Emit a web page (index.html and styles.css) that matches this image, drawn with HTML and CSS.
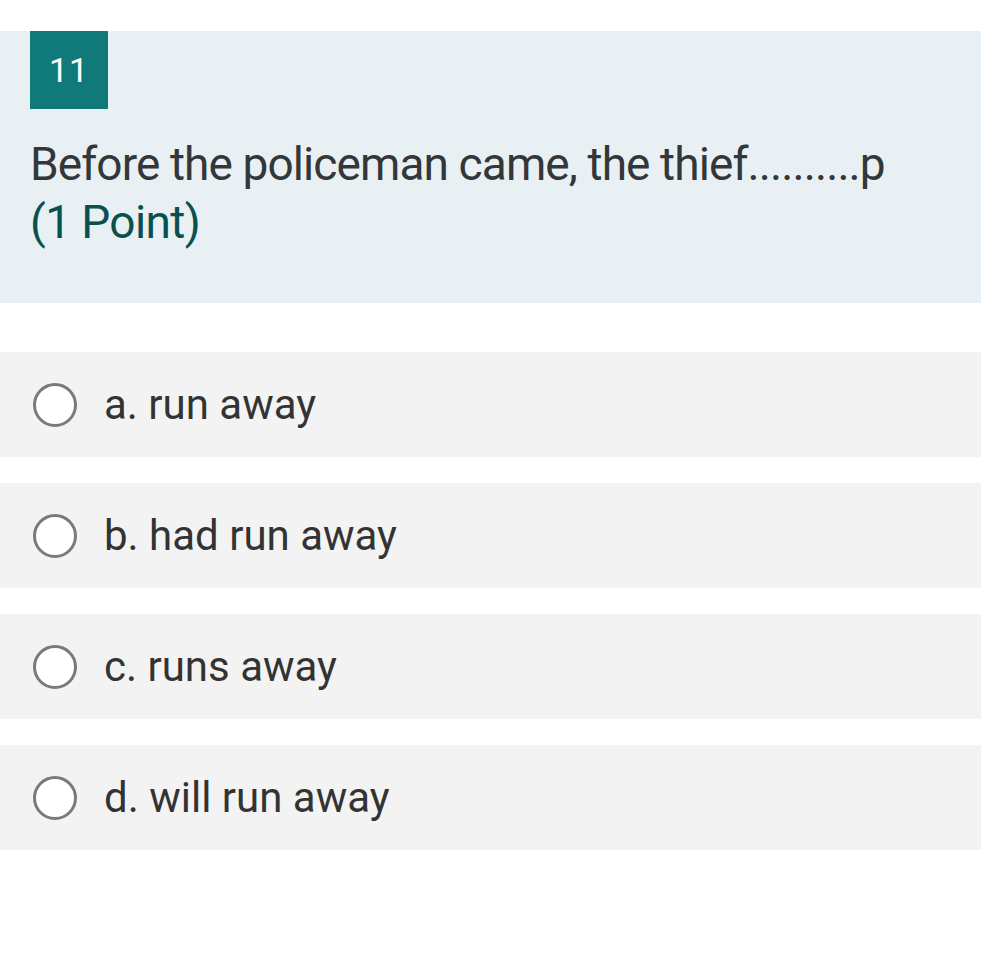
FILE: index.html
```html
<!DOCTYPE html>
<html>
<head>
<meta charset="utf-8">
<link rel="stylesheet" href="styles.css">
</head>
<body>
<div class="page">
  <section class="question">
    <div class="badge">11</div>
    <div class="qtext">Before the policeman came, the thief..........p</div>
    <div class="points">(1 Point)</div>
  </section>
  <div class="options">
    <label class="option"><span class="radio"></span><span class="label">a. run away</span></label>
    <label class="option"><span class="radio"></span><span class="label">b. had run away</span></label>
    <label class="option"><span class="radio"></span><span class="label">c. runs away</span></label>
    <label class="option"><span class="radio"></span><span class="label">d. will run away</span></label>
  </div>
</div>
</body>
</html>
```
FILE: styles.css
```css
html, body {
  margin: 0;
  padding: 0;
  background: #ffffff;
}
body {
  font-family: Roboto, "Liberation Sans", sans-serif;
}
.page {
  width: 981px;
  padding-top: 31px;
}
.question {
  background: #e8f0f3;
  height: 272px;
  padding-left: 30px;
  box-sizing: border-box;
}
.badge {
  width: 78px;
  height: 78px;
  background: #0f7a79;
  color: #ffffff;
  font-size: 34px;
  display: flex;
  align-items: center;
  justify-content: center;
  letter-spacing: 1px;
}
.qtext {
  margin-top: 26px;
  font-size: 46px;
  line-height: 58px;
  letter-spacing: -0.9px;
  color: #33373a;
}
.points {
  font-size: 46px;
  line-height: 58px;
  letter-spacing: -0.6px;
  color: #0b5050;
}
.options {
  margin-top: 49px;
  display: flex;
  flex-direction: column;
  gap: 26px;
}
.option {
  height: 105px;
  background: #f3f3f3;
  display: flex;
  align-items: center;
  padding-left: 33px;
}
.radio {
  width: 38px;
  height: 38px;
  border: 3px solid #7a7a7a;
  border-radius: 50%;
  background: #ffffff;
  flex: none;
}
.label {
  margin-left: 27px;
  font-size: 42px;
  color: #333333;
}
```
